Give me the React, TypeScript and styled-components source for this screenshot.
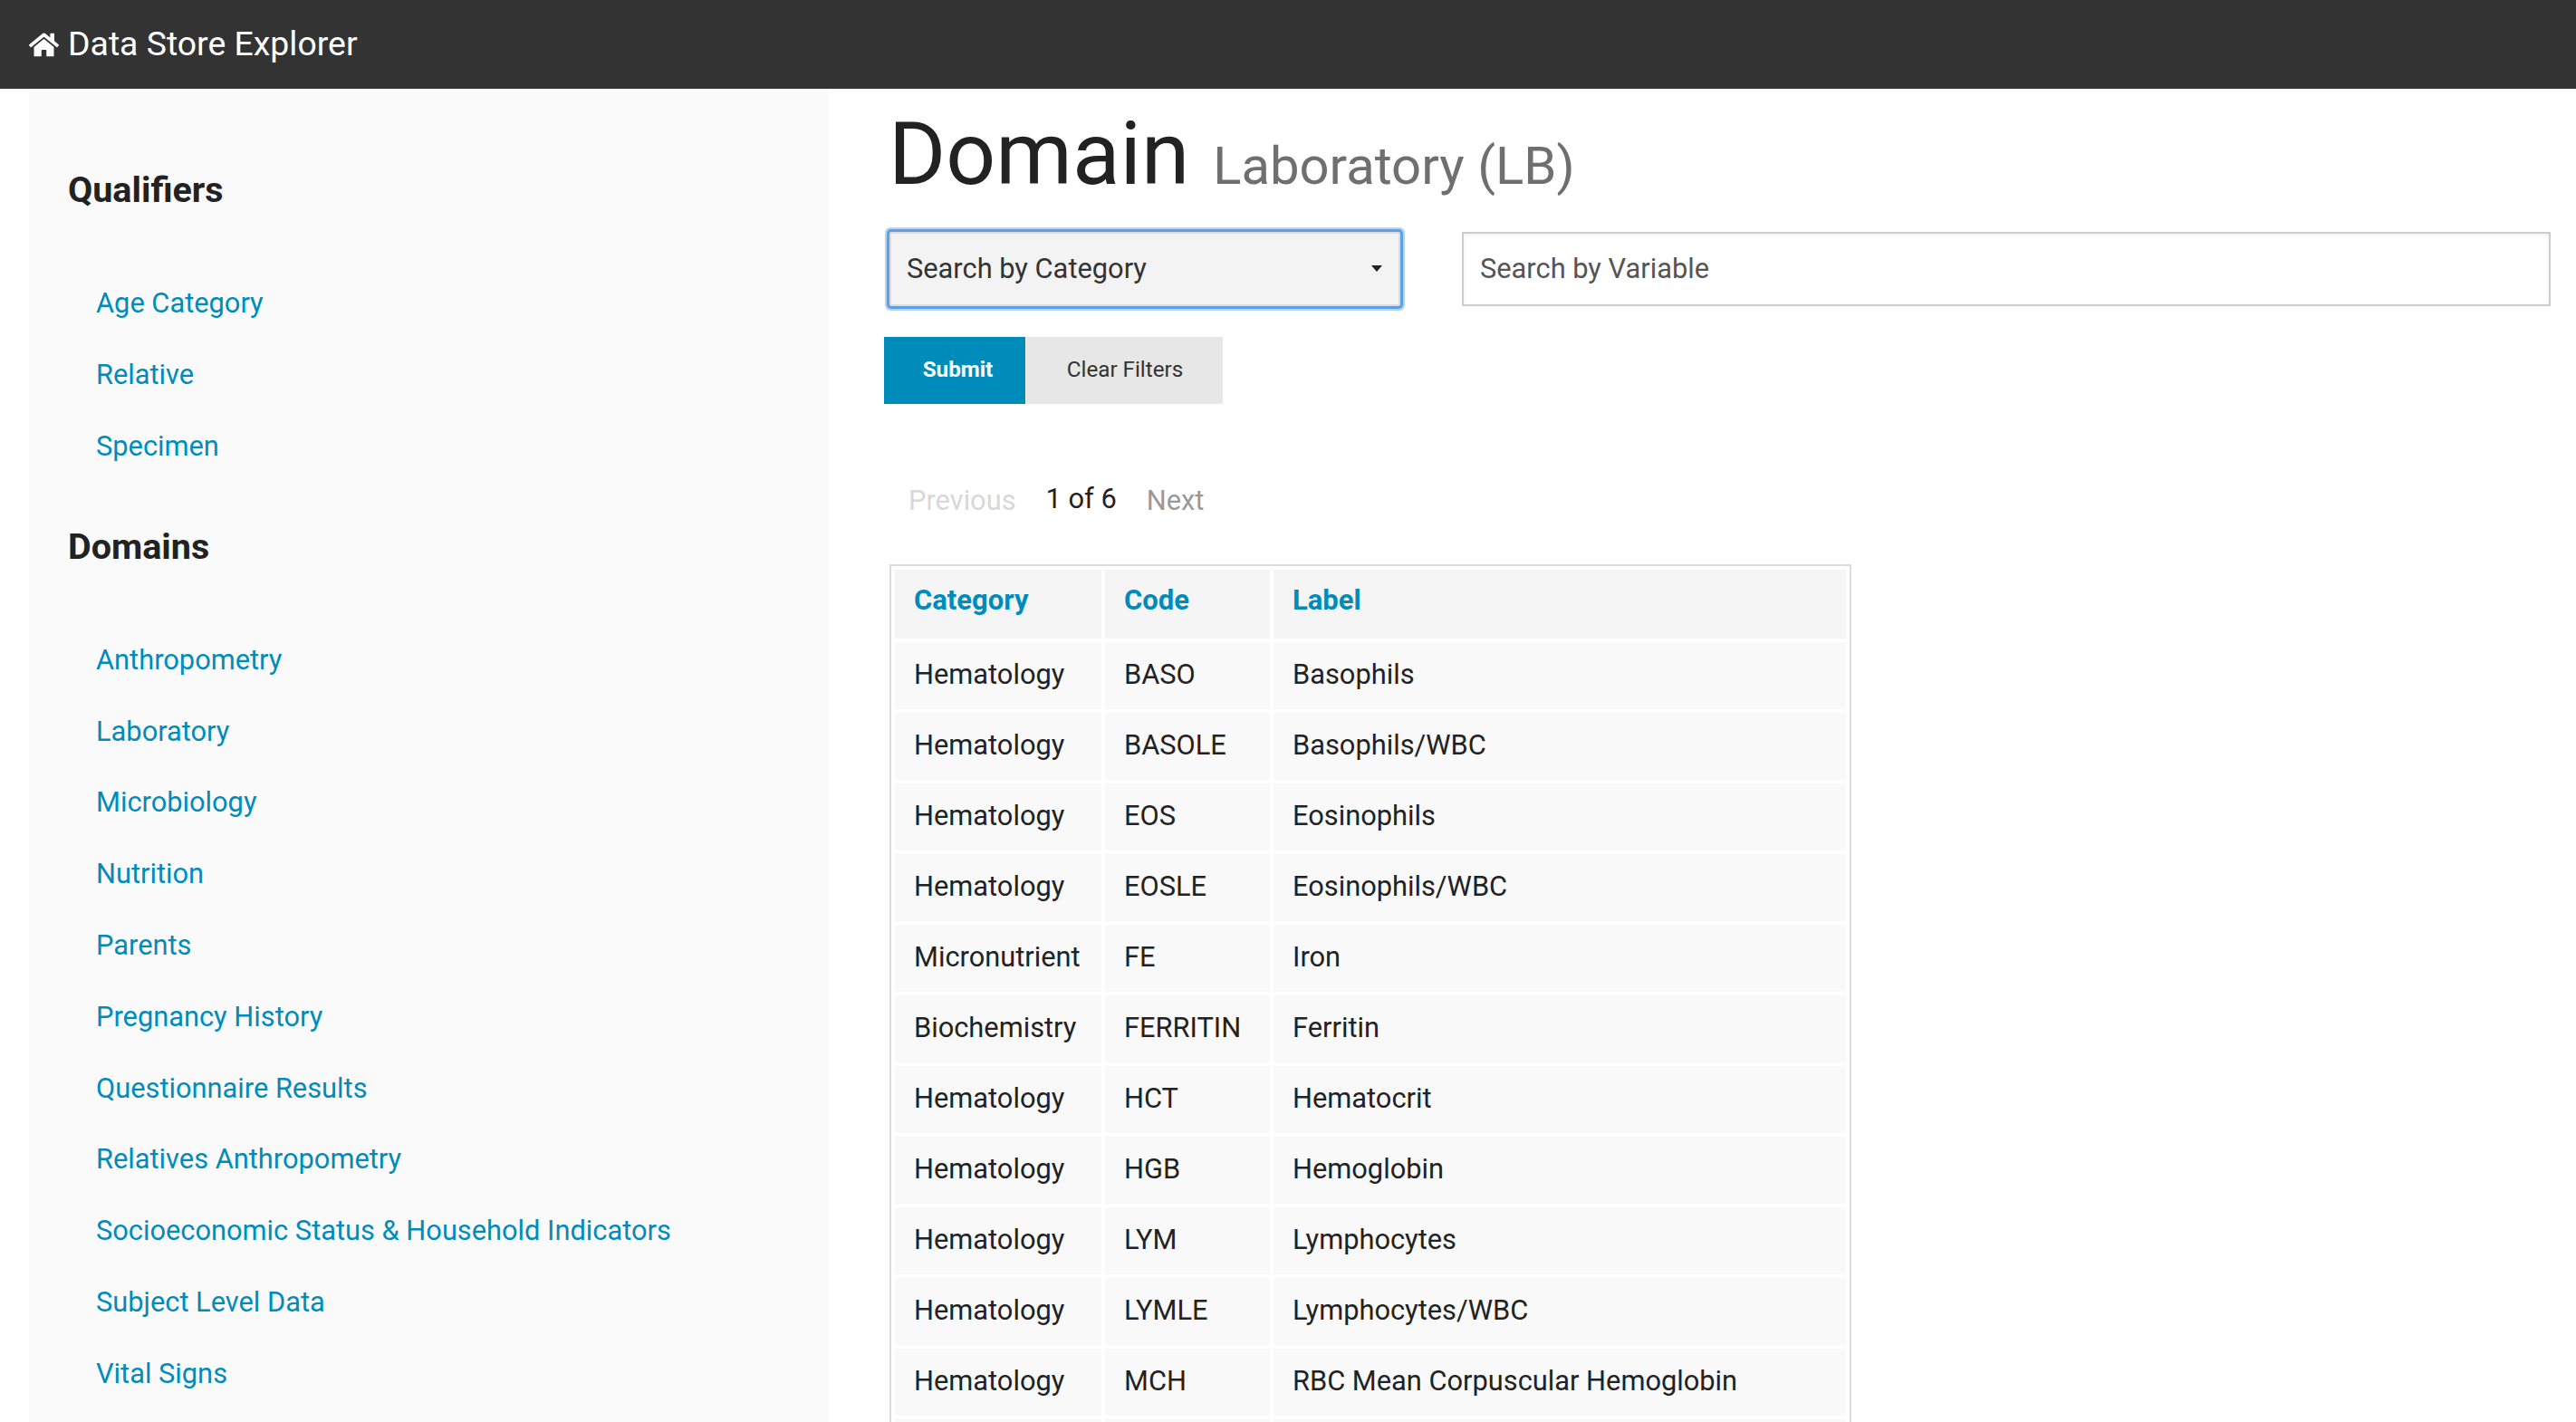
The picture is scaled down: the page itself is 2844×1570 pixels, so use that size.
import React from "react";
import styled, { createGlobalStyle } from "styled-components";
import { FaHome } from "react-icons/fa";

const qualifiers = ["Age Category", "Relative", "Specimen"];
const domains = [
  "Anthropometry",
  "Laboratory",
  "Microbiology",
  "Nutrition",
  "Parents",
  "Pregnancy History",
  "Questionnaire Results",
  "Relatives Anthropometry",
  "Socioeconomic Status & Household Indicators",
  "Subject Level Data",
  "Vital Signs",
];
const rows = [
  ["Hematology", "BASO", "Basophils"],
  ["Hematology", "BASOLE", "Basophils/WBC"],
  ["Hematology", "EOS", "Eosinophils"],
  ["Hematology", "EOSLE", "Eosinophils/WBC"],
  ["Micronutrient", "FE", "Iron"],
  ["Biochemistry", "FERRITIN", "Ferritin"],
  ["Hematology", "HCT", "Hematocrit"],
  ["Hematology", "HGB", "Hemoglobin"],
  ["Hematology", "LYM", "Lymphocytes"],
  ["Hematology", "LYMLE", "Lymphocytes/WBC"],
  ["Hematology", "MCH", "RBC Mean Corpuscular Hemoglobin"],
];

const GlobalStyle = createGlobalStyle`
  html, body {
    margin: 0;
    padding: 0;
    background: #fff;
  }
  * {
    box-sizing: border-box;
  }
`;

const Page = styled.div`
  height: 1570px;
  overflow: hidden;
  font-family: Roboto, "Liberation Sans", sans-serif;
  font-size: 30.8px;
  color: #222;
`;

const TopBar = styled.header`
  display: flex;
  align-items: center;
  height: 98px;
  padding-left: 32px;
  background: #333;
  color: #fff;
`;

const Brand = styled.span`
  font-size: 37.4px;
  margin-left: 10px;
  line-height: 92px;
  margin-bottom: 2px;
`;

const Body = styled.div`
  display: flex;
  align-items: stretch;
  height: 1472px;
`;

const Sidebar = styled.aside`
  width: 882px;
  margin-left: 32px;
  padding: 84px 0 0 43px;
  background: #fafafa;
  flex-shrink: 0;
`;

const SideTitle = styled.h4`
  margin: 0 0 58px;
  font-size: 39.5px;
  line-height: 56px;
  font-weight: 700;
  color: #222;
`;

const SideList = styled.ul`
  list-style: none;
  margin: 0 0 43.5px;
  padding: 0 0 0 31px;
`;

const SideItem = styled.li`
  height: 78.8px;
  line-height: 78.8px;
  color: #008cba;
`;

const Main = styled.main`
  flex: 1;
  padding: 0 28px 0 62px;
`;

const Heading = styled.h1`
  margin: 0 0 0 5px;
  height: 158px;
  padding-top: 16px;
  font-size: 96.5px;
  line-height: 112px;
  font-weight: 400;
  color: #222;
`;

const SubHeading = styled.small`
  margin-left: 2px;
  font-size: 58px;
  color: #6f6f6f;
`;

const SearchRow = styled.div`
  display: flex;
  height: 82px;
  margin-left: 6px;
`;

const SelectBox = styled.div`
  display: flex;
  align-items: center;
  justify-content: space-between;
  width: 564px;
  height: 82px;
  padding: 0 18px 2px 17px;
  background: #f3f3f3;
  border: 2px solid #dcdcdc;
  border-radius: 2px;
  box-shadow: 0 0 0 3px #5f9fe6, 0 0 0 5px #b5d5f7;
  color: #333;
`;

const Caret = styled.span`
  width: 0;
  height: 0;
  border-left: 6px solid transparent;
  border-right: 6px solid transparent;
  border-top: 7px solid #222;
`;

const SearchInput = styled.div`
  display: flex;
  align-items: center;
  width: 1202px;
  margin-left: 68px;
  padding: 0 0 2px 18px;
  border: 2px solid #ccc;
  box-shadow: inset 0 2px 4px rgba(0, 0, 0, 0.06);
  color: #555;
`;

const ButtonRow = styled.div`
  display: flex;
  gap: 1px;
  margin-top: 34px;
`;

const Button = styled.div<{ $primary?: boolean }>`
  display: flex;
  align-items: center;
  justify-content: center;
  width: ${(p) => (p.$primary ? "156px" : "217px")};
  height: 74px;
  padding: ${(p) => (p.$primary ? "0 0 2px 7px" : "0 0 2px 1px")};
  font-size: 24.2px;
  font-weight: ${(p) => (p.$primary ? 700 : 400)};
  background: ${(p) => (p.$primary ? "#008cba" : "#e7e7e7")};
  color: ${(p) => (p.$primary ? "#fff" : "#333")};
`;

const Pager = styled.div`
  display: flex;
  align-items: center;
  height: 64px;
  margin: 72px 0 0 27px;
`;

const PagerLink = styled.span<{ $disabled?: boolean }>`
  color: ${(p) => (p.$disabled ? "#d8d8d8" : "#999")};
  padding-top: 4px;
`;

const PagerCount = styled.span`
  margin: 0 33px;
  color: #222;
`;

const Table = styled.table`
  table-layout: fixed;
  width: 1062px;
  margin: 41px 0 0 6px;
  border: 2px solid #ddd;
  border-collapse: separate;
  border-spacing: 4px;
`;

const HeadCell = styled.th<{ $width?: number }>`
  width: ${(p) => (p.$width ? `${p.$width}px` : "auto")};
  height: 76px;
  padding: 0 0 9px 21px;
  text-align: left;
  font-size: 31px;
  font-weight: 700;
  color: #008cba;
  background: #f5f5f5;
`;

const Cell = styled.td`
  height: 74px;
  padding: 0 0 4px 21px;
  background: #f9f9f9;
  white-space: nowrap;
`;

export default function App() {
  return (
    <Page>
      <GlobalStyle />
      <TopBar>
        <FaHome size={33} />
        <Brand>Data Store Explorer</Brand>
      </TopBar>
      <Body>
        <Sidebar>
          <SideTitle>Qualifiers</SideTitle>
          <SideList>
            {qualifiers.map((q) => (
              <SideItem key={q}>{q}</SideItem>
            ))}
          </SideList>
          <SideTitle>Domains</SideTitle>
          <SideList>
            {domains.map((d) => (
              <SideItem key={d}>{d}</SideItem>
            ))}
          </SideList>
        </Sidebar>
        <Main>
          <Heading>
            Domain <SubHeading>Laboratory (LB)</SubHeading>
          </Heading>
          <SearchRow>
            <SelectBox>
              Search by Category
              <Caret />
            </SelectBox>
            <SearchInput>Search by Variable</SearchInput>
          </SearchRow>
          <ButtonRow>
            <Button $primary>Submit</Button>
            <Button>Clear Filters</Button>
          </ButtonRow>
          <Pager>
            <PagerLink $disabled>Previous</PagerLink>
            <PagerCount>1 of 6</PagerCount>
            <PagerLink>Next</PagerLink>
          </Pager>
          <Table>
            <thead>
              <tr>
                <HeadCell $width={228}>Category</HeadCell>
                <HeadCell $width={182}>Code</HeadCell>
                <HeadCell>Label</HeadCell>
              </tr>
            </thead>
            <tbody>
              {rows.map((r) => (
                <tr key={r[1]}>
                  <Cell>{r[0]}</Cell>
                  <Cell>{r[1]}</Cell>
                  <Cell>{r[2]}</Cell>
                </tr>
              ))}
              <tr>
                <Cell />
                <Cell />
                <Cell />
              </tr>
            </tbody>
          </Table>
        </Main>
      </Body>
    </Page>
  );
}
